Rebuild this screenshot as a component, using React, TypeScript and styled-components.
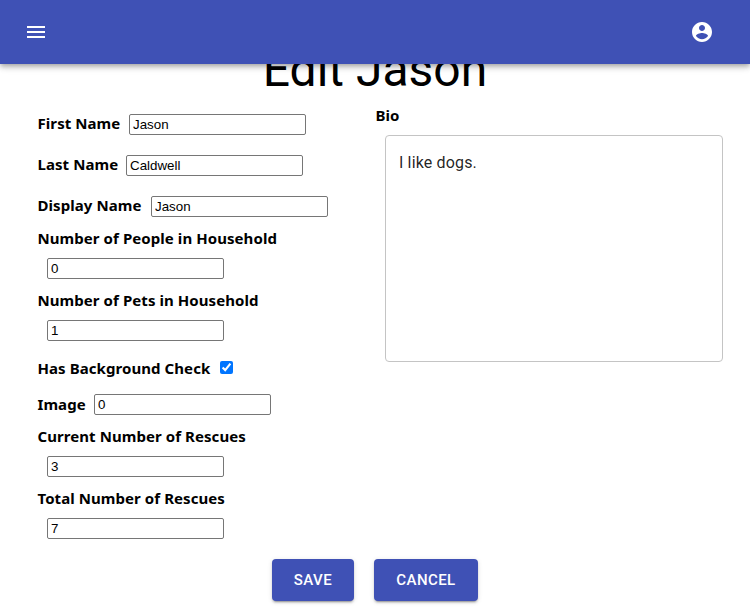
import React from "react";
import styled, { createGlobalStyle } from "styled-components";

const GlobalStyle = createGlobalStyle`
  html, body { margin: 0; height: 100%; overflow: hidden; background: #fff; }
  * { box-sizing: border-box; }
`;

const Page = styled.div`
  width: 750px;
  height: 611px;
  overflow: hidden;
  font-family: "Noto Sans", "Open Sans", sans-serif;
  color: #000;
`;

const AppBar = styled.header`
  position: relative;
  z-index: 2;
  display: flex;
  align-items: center;
  justify-content: space-between;
  height: 64px;
  padding: 0 36px 0 24px;
  background: #3f51b5;
  color: #fff;
  box-shadow: 0 2px 4px -1px rgba(0, 0, 0, 0.2), 0 4px 5px rgba(0, 0, 0, 0.14),
    0 1px 10px rgba(0, 0, 0, 0.12);
`;

const Icon = styled.svg`
  display: block;
  width: 24px;
  height: 24px;
  fill: currentColor;
`;

const Title = styled.h1`
  margin: -23px 0 0;
  height: 57px;
  font: 400 48px/57px Roboto, sans-serif;
  text-align: center;
`;

const Columns = styled.main`
  display: grid;
  grid-template-columns: 338px 348px;
  padding-left: 37px;
  height: 452px;
  margin-top: 6px;
`;

const Field = styled.div<{ $height: number }>`
  display: flex;
  align-items: center;
  gap: 10px;
  height: ${(p) => p.$height}px;
`;

const Stacked = styled.div`
  display: flex;
  flex-direction: column;
  height: 62px;
`;

const Label = styled.label<{ $width?: number; $raised?: boolean }>`
  flex: none;
  width: ${(p) => (p.$width ? `${p.$width}px` : "auto")};
  padding-bottom: ${(p) => (p.$raised ? 2 : 0)}px;
  font-size: 15px;
  font-weight: 700;
  letter-spacing: 0.07px;
  line-height: 24px;
  text-indent: 0.5px;
  white-space: nowrap;
`;

const TextInput = styled.input<{ $indent?: boolean }>`
  width: 177px;
  height: 21px;
  margin: ${(p) => (p.$indent ? "8px 0 0 10px" : "0")};
  padding: 1px 3px;
  border: 1px solid #767676;
  border-radius: 2px;
  background: #fff;
  color: #000;
  font: 13.333px "Liberation Sans", Arial, sans-serif;
`;

const Check = styled.input`
  width: 13px;
  height: 13px;
  margin: 0;
`;

const Form = styled.section`
  padding-top: 5px;
`;

const NameFields = styled.div`
  margin-bottom: 5px;
`;

const BioSection = styled.section`
  display: flex;
  flex-direction: column;
  margin-top: -1px;
`;

const Bio = styled.textarea`
  width: 338px;
  height: 227px;
  margin: 8px 0 0 10px;
  padding: 17px 13px;
  resize: none;
  border: 1px solid #c4c4c4;
  border-radius: 4px;
  outline: none;
  color: rgba(0, 0, 0, 0.87);
  font: 400 16px/19px Roboto, sans-serif;
  letter-spacing: 0.15px;
`;

const Actions = styled.footer`
  display: flex;
  justify-content: center;
  gap: 20px;
  margin-top: 3px;
`;

const Button = styled.button<{ $width: number }>`
  width: ${(p) => p.$width}px;
  height: 42px;
  padding: 0;
  border: 0;
  border-radius: 4px;
  background: #3f51b5;
  color: #fff;
  font: 500 15px/26px Roboto, sans-serif;
  letter-spacing: 0.42px;
  text-transform: uppercase;
  box-shadow: 0 3px 1px -2px rgba(0, 0, 0, 0.2), 0 2px 2px rgba(0, 0, 0, 0.14),
    0 1px 5px rgba(0, 0, 0, 0.12);
`;

type RowProps = { id: string; label: string; value: string };

const InlineField = ({ id, label, value, width, height }: RowProps & { width: number; height: number }) => (
  <Field $height={height}>
    <Label htmlFor={id} $width={width} $raised>{label}</Label>
    <TextInput id={id} defaultValue={value} />
  </Field>
);

const StackedField = ({ id, label, value }: RowProps) => (
  <Stacked>
    <Label htmlFor={id}>{label}</Label>
    <TextInput id={id} defaultValue={value} $indent />
  </Stacked>
);

export default function App() {
  return (
    <Page>
      <GlobalStyle />
      <AppBar>
        <Icon viewBox="0 0 24 24"><path d="M3 18h18v-2H3v2zm0-5h18v-2H3v2zm0-7v2h18V6H3z" /></Icon>
        <Icon viewBox="0 0 24 24"><path d="M12 2C6.48 2 2 6.48 2 12s4.48 10 10 10 10-4.48 10-10S17.52 2 12 2zm0 3c1.66 0 3 1.34 3 3s-1.34 3-3 3-3-1.34-3-3 1.34-3 3-3zm0 14.2c-2.5 0-4.71-1.28-6-3.22.03-1.99 4-3.08 6-3.08 1.99 0 5.97 1.09 6 3.08-1.29 1.94-3.5 3.22-6 3.22z" /></Icon>
      </AppBar>
      <Title>Edit Jason</Title>
      <Columns>
        <Form>
          <NameFields>
            <InlineField id="first" label="First Name" value="Jason" width={82} height={30} />
            <InlineField id="last" label="Last Name" value="Caldwell" width={79} height={52} />
            <InlineField id="display" label="Display Name" value="Jason" width={104} height={30} />
          </NameFields>
          <StackedField id="people" label="Number of People in Household" value="0" />
          <StackedField id="pets" label="Number of Pets in Household" value="1" />
          <Field $height={35}>
            <Label htmlFor="check" $width={173}>Has Background Check</Label>
            <Check id="check" type="checkbox" defaultChecked />
          </Field>
          <InlineField id="image" label="Image" value="0" width={47} height={39} />
          <StackedField id="current" label="Current Number of Rescues" value="3" />
          <StackedField id="total" label="Total Number of Rescues" value="7" />
        </Form>
        <BioSection>
          <Label htmlFor="bio">Bio</Label>
          <Bio id="bio" defaultValue="I like dogs." />
        </BioSection>
      </Columns>
      <Actions>
        <Button $width={82}>Save</Button>
        <Button $width={104}>Cancel</Button>
      </Actions>
    </Page>
  );
}
